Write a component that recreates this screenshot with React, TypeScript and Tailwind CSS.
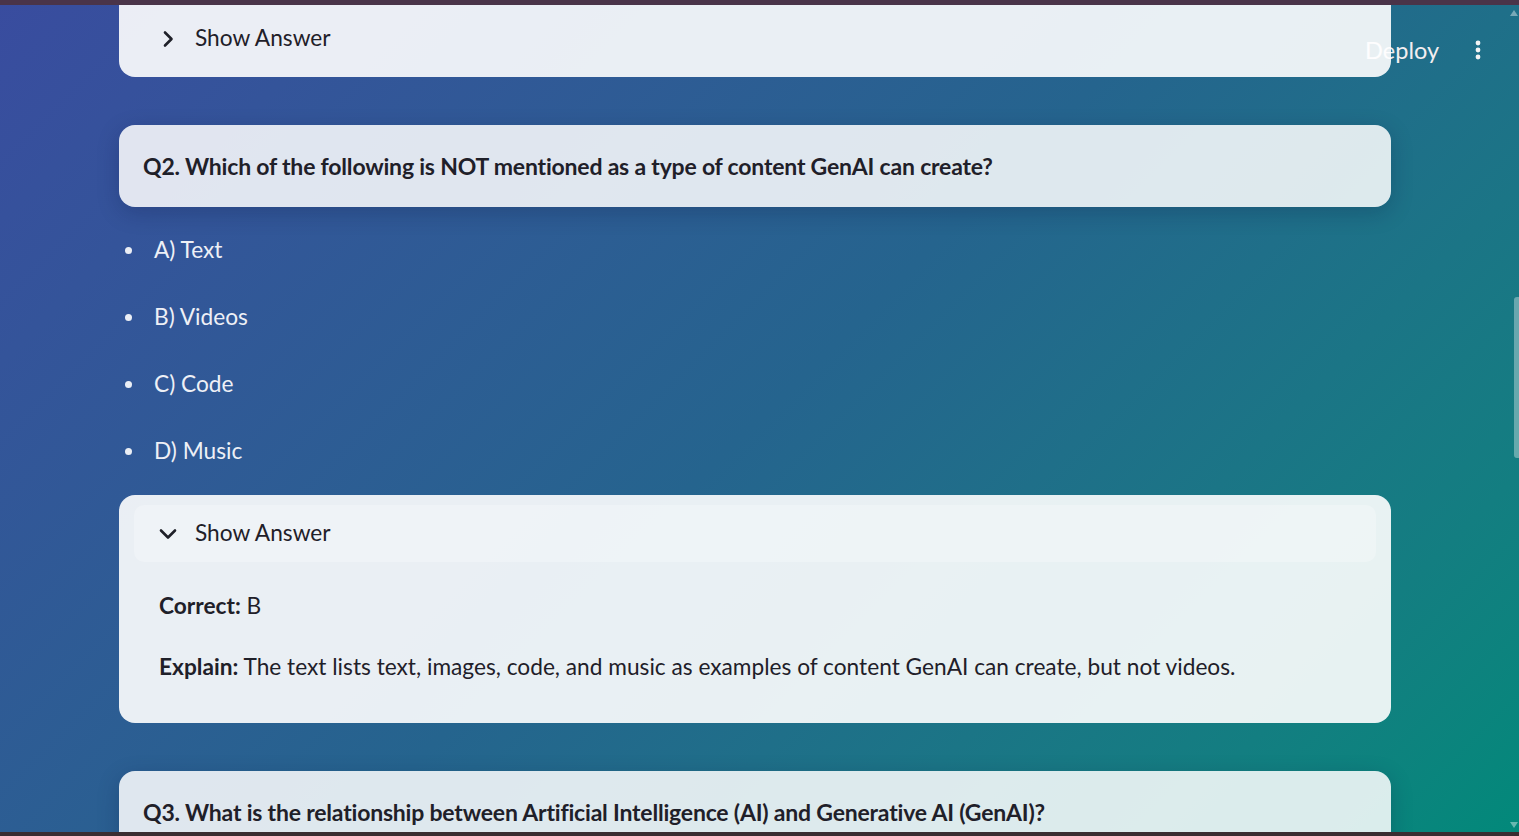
import { ReactNode } from 'react';

const FONT = { fontFamily: "Lato, 'Noto Sans', sans-serif" };

const OPTIONS = ['A) Text', 'B) Videos', 'C) Code', 'D) Music'];

function ChevronRight() {
  return (
    <svg width="14" height="18" viewBox="0 0 14 18" fill="none">
      <path d="M4 2.5l6.5 6.5L4 15.5" stroke="#1f2029" strokeWidth="2.6" strokeLinecap="round" strokeLinejoin="round" />
    </svg>
  );
}

function ChevronDown() {
  return (
    <svg width="18" height="12" viewBox="0 0 18 12" fill="none">
      <path d="M2 2.5l7 7 7-7" stroke="#1f2029" strokeWidth="2.6" strokeLinecap="round" strokeLinejoin="round" />
    </svg>
  );
}

function QuestionCard({ children }: { children: ReactNode }) {
  return (
    <div className="h-[82px] rounded-[16px] bg-white/85 shadow-[0_6px_22px_rgba(10,20,60,0.22)] flex items-center px-6">
      <p className="text-[23px] font-bold text-[#1f2029] tracking-[-0.2px]">{children}</p>
    </div>
  );
}

export default function App() {
  return (
    <div
      className="relative h-[836px] w-[1519px] overflow-hidden bg-linear-135 from-[#394c9f] via-[#25648e] to-[#02897a]"
      style={FONT}
    >
      {/* window chrome */}
      <div className="absolute top-0 left-0 right-0 h-[5px] bg-[#4a3449] z-30" />
      <div className="absolute bottom-0 left-0 right-0 h-[4px] bg-[#3a2d31] z-30" />

      {/* app header */}
      <div className="absolute top-[34px] right-[38px] flex items-center gap-[36px] text-[#f3eef0]">
        <span className="text-[23.5px] leading-[32px]">Deploy</span>
        <svg width="6" height="20" viewBox="0 0 6 20">
          <circle cx="3" cy="3" r="2.4" fill="#f3f3f3" />
          <circle cx="3" cy="10" r="2.4" fill="#f3f3f3" />
          <circle cx="3" cy="17" r="2.4" fill="#f3f3f3" />
        </svg>
      </div>

      {/* scrollbar */}
      <div className="absolute right-0 top-[297px] h-[161px] w-[5px] rounded-l-[3px] bg-white/35 z-20" />
      <div className="absolute right-[1px] top-[10px] w-0 h-0 border-l-[4px] border-r-[4px] border-b-[6px] border-l-transparent border-r-transparent border-b-white/40 z-20" />
      <div className="absolute right-[1px] bottom-[8px] w-0 h-0 border-l-[4px] border-r-[4px] border-t-[6px] border-l-transparent border-r-transparent border-t-white/40 z-20" />

      <main className="relative z-10 ml-[119px] w-[1272px] flex flex-col">
        {/* Q1 answer, collapsed */}
        <div className="rounded-b-[16px] bg-white/90 p-[10px] px-[15px] h-[77px]">
          <div className="h-[57px] flex items-center rounded-[10px]">
            <div className="w-[46px] flex justify-center pl-[22px]">
              <ChevronRight />
            </div>
            <span className="text-[22.7px] text-[#1f2029] ml-[15px]">Show Answer</span>
          </div>
        </div>

        <div className="mt-[48px]">
          <QuestionCard>Q2. Which of the following is NOT mentioned as a type of content GenAI can create?</QuestionCard>
        </div>

        <ul className="mt-[10px] mb-[10px]">
          {OPTIONS.map((o) => (
            <li key={o} className="h-[67px] flex items-center">
              <span className="ml-[6px] w-[7px] h-[7px] rounded-full bg-white/90" />
              <span className="ml-[22px] text-[22.7px] text-[#eef0f6]">{o}</span>
            </li>
          ))}
        </ul>

        {/* Q2 answer, expanded */}
        <div className="rounded-[16px] bg-white/90 pt-[10px] px-[15px] pb-[10px] h-[228px]">
          <div className="h-[57px] flex items-center rounded-[10px] bg-white/25">
            <div className="w-[46px] flex justify-center pl-[22px]">
              <ChevronDown />
            </div>
            <span className="text-[22.7px] text-[#1f2029] ml-[15px]">Show Answer</span>
          </div>
          <div className="px-[25px] text-[22.7px] text-[#1f2029]">
            <p className="mt-[27px]">
              <b>Correct:</b> B
            </p>
            <p className="mt-[27px]">
              <b>Explain:</b> The text lists text, images, code, and music as examples of content GenAI can create, but not videos.
            </p>
          </div>
        </div>

        <div className="mt-[48px]">
          <QuestionCard>Q3. What is the relationship between Artificial Intelligence (AI) and Generative AI (GenAI)?</QuestionCard>
        </div>
      </main>
    </div>
  );
}
